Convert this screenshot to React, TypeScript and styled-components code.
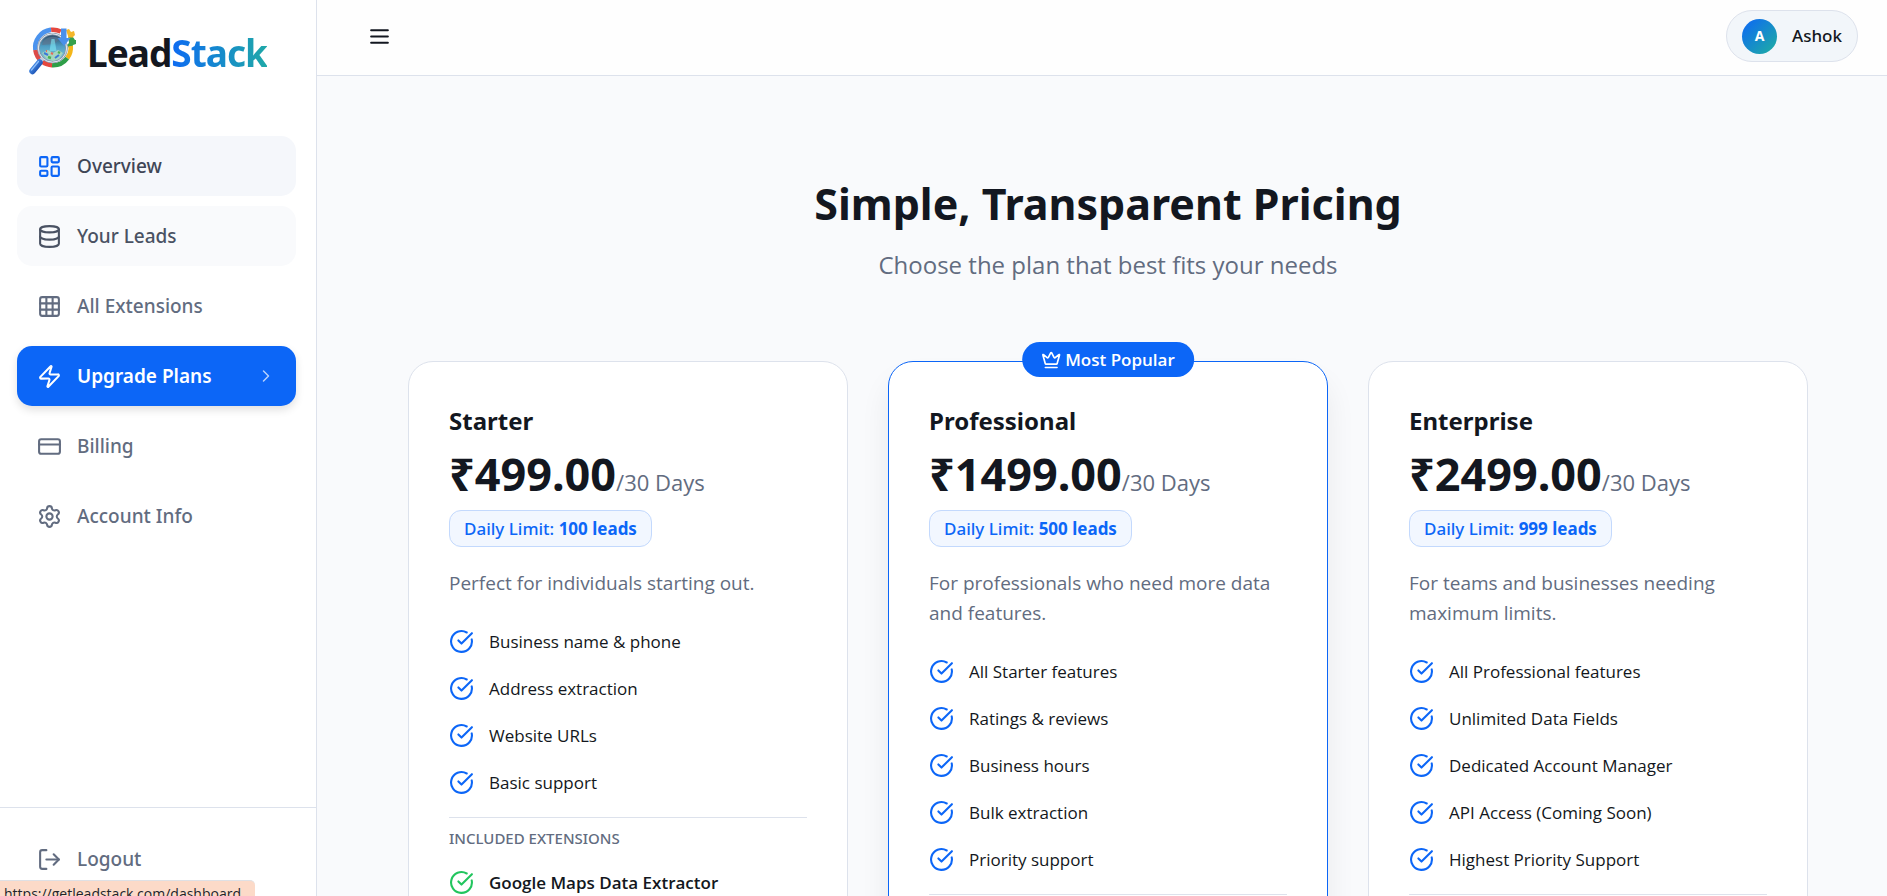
import React from 'react';
import styled, { createGlobalStyle, css } from 'styled-components';
import {
  LayoutDashboard, Database, Grid3x3, Zap, CreditCard, Settings, LogOut,
  ChevronRight, CircleCheckBig, Crown,
} from 'lucide-react';

const GlobalStyle = createGlobalStyle`
  *, *::before, *::after { box-sizing: border-box; }
  html, body { margin: 0; height: 100%; overflow: hidden; }
  body {
    font-family: 'Open Sans', 'Noto Sans', sans-serif;
    color: #131720;
    background: #f9fafc;
  }
  button { font: inherit; border: 0; background: none; padding: 0; cursor: pointer; }
  a { color: inherit; text-decoration: none; }
  ul { list-style: none; margin: 0; padding: 0; }
  h1, h2, h3, p { margin: 0; }
`;

const displayFont = css`
  font-family: 'Noto Sans', 'Open Sans', sans-serif;
`;

const Shell = styled.div`
  display: grid;
  grid-template-columns: 317px 1fr;
  height: 100vh;
`;

const Sidebar = styled.aside`
  ${displayFont}
  display: flex;
  flex-direction: column;
  background: #fff;
  border-right: 1px solid #dde2ec;
`;

const Brand = styled.a`
  display: flex;
  align-items: center;
  gap: 10px;
  height: 106px;
  padding: 0 28px;
`;

const BrandName = styled.span`
  font-size: 37px;
  line-height: 44px;
  font-weight: 700;
  letter-spacing: -1px;
`;

const BrandAccent = styled.span`
  background: linear-gradient(90deg, #0d6bf2, #1fa8a8);
  background-clip: text;
  -webkit-background-clip: text;
  color: transparent;
`;

const Nav = styled.nav`
  flex: 1;
  display: flex;
  flex-direction: column;
  gap: 10px;
  padding: 30px 20px 20px 17px;
`;

type Tone = 'plain' | 'hover' | 'faint' | 'active';

const tones = {
  plain: css`color: #626c80;`,
  hover: css`color: #3f4656; background: #f5f7fb; svg { color: #0c66f7; }`,
  faint: css`color: #4a5263; background: #f9fafc;`,
  active: css`
    color: #fff;
    background: #0c66f7;
    font-weight: 600;
    box-shadow: 0 4px 8px rgba(0, 0, 0, 0.12);
  `,
};

const navItem = css`
  display: flex;
  align-items: center;
  gap: 15px;
  height: 60px;
  padding: 0 20px;
  border-radius: 15px;
  font-size: 19px;
  line-height: 30px;
  font-weight: 500;
`;

const NavLink = styled.a<{ $tone: Tone }>`
  ${navItem}
  ${({ $tone }) => tones[$tone]}
`;

const NavLabel = styled.span`
  flex: 1;
`;

const NavArrow = styled(ChevronRight)`
  opacity: 0.7;
`;

const SidebarFoot = styled.div`
  padding: 21px 20px 7px 17px;
  border-top: 1px solid #dde2ec;
`;

const LogoutButton = styled.button`
  ${navItem}
  width: 100%;
  color: #626c80;
  text-align: left;
`;

const Page = styled.div`
  display: flex;
  flex-direction: column;
  min-width: 0;
  height: 100vh;
`;

const TopBar = styled.header`
  display: flex;
  justify-content: space-between;
  align-items: center;
  flex: none;
  padding: 10px 29px 13px 50px;
  background: #fefefe;
  border-bottom: 1px solid #dde2ec;
`;

const MenuButton = styled.button`
  display: flex;
  color: #131720;
`;

const Profile = styled.button`
  ${displayFont}
  display: flex;
  align-items: center;
  gap: 15px;
  height: 52px;
  padding: 0 15px;
  border: 1px solid #dde2ec;
  border-radius: 26px;
  background: #f2f6fa;
  color: #131720;
  font-size: 17px;
  line-height: 26px;
  font-weight: 500;
`;

const Avatar = styled.span`
  display: grid;
  place-items: center;
  width: 35px;
  height: 35px;
  border-radius: 50%;
  background: linear-gradient(135deg, #0c66f7, #1fb0a0);
  color: #fff;
  font-size: 14px;
  line-height: 20px;
  font-weight: 700;
`;

const Main = styled.main`
  flex: 1;
  overflow: hidden;
  padding: 95px 79px 40px 91px;
`;

const Intro = styled.div`
  text-align: center;
`;

const Title = styled.h1`
  ${displayFont}
  font-size: 43px;
  line-height: 66px;
  font-weight: 700;
`;

const Subtitle = styled.p`
  margin-top: 10px;
  font-size: 24px;
  line-height: 36px;
  color: #626c80;
`;

const Plans = styled.div`
  display: grid;
  grid-template-columns: repeat(3, 1fr);
  gap: 40px;
  margin-top: 78px;
`;

const Card = styled.section<{ $featured?: boolean }>`
  position: relative;
  padding: 40px;
  background: #fff;
  border: 1px solid ${({ $featured }) => ($featured ? '#0c66f7' : '#dde2ec')};
  border-radius: 25px;
  box-shadow: ${({ $featured }) => ($featured ? '0 20px 30px rgba(19, 23, 32, 0.07)' : 'none')};
`;

const Ribbon = styled.div`
  position: absolute;
  top: -20px;
  left: 50%;
  transform: translateX(-50%);
  display: flex;
  align-items: center;
  gap: 4px;
  height: 35px;
  padding: 0 19px;
  border-radius: 18px;
  background: #0c66f7;
  color: #fff;
  font-size: 17px;
  line-height: 26px;
  font-weight: 600;
  white-space: nowrap;
`;

const PlanName = styled.h2`
  ${displayFont}
  font-size: 24px;
  line-height: 38px;
  font-weight: 700;
`;

const PriceRow = styled.p`
  display: flex;
  align-items: baseline;
`;

const Price = styled.strong`
  ${displayFont}
  font-size: 45px;
  line-height: 68px;
  font-weight: 700;
`;

const Period = styled.span`
  font-size: 22px;
  line-height: 34px;
  color: #626c80;
`;

const Limit = styled.p`
  ${displayFont}
  width: fit-content;
  margin-top: 2px;
  padding: 4px 14px;
  border: 1px solid #c3d9fd;
  border-radius: 12px;
  background: #f2f7ff;
  color: #0c66f7;
  font-size: 17px;
  line-height: 27px;
  font-weight: 500;
`;

const Description = styled.p`
  margin-top: 21px;
  font-size: 19px;
  line-height: 30px;
  color: #626c80;
`;

const Features = styled.ul`
  display: flex;
  flex-direction: column;
  gap: 20px;
  margin-top: 30px;
`;

const Feature = styled.li<{ $strong?: boolean }>`
  display: flex;
  align-items: center;
  gap: 15px;
  font-size: 17px;
  line-height: 27px;
  font-weight: ${({ $strong }) => ($strong ? 600 : 400)};
  svg { flex: none; color: ${({ $strong }) => ($strong ? '#22c55e' : '#0c66f7')}; }
`;

const Included = styled.div`
  margin-top: 21px;
  padding-top: 8px;
  border-top: 1px solid #dde2ec;
  ul { margin-top: 18px; }
`;

const IncludedTitle = styled.h3`
  ${displayFont}
  font-size: 15px;
  line-height: 25px;
  font-weight: 500;
  color: #626c80;
  text-transform: uppercase;
`;

const LinkStatus = styled.div`
  position: fixed;
  left: 0;
  bottom: 0;
  width: 255px;
  height: 16px;
  padding: 3px 4px 0;
  overflow: hidden;
  border-top: 1px solid #dfe0e4;
  border-top-right-radius: 5px;
  background: #fcdac8;
  color: #22242c;
  font-size: 14px;
  line-height: 20px;
  white-space: nowrap;
`;

const ringParts = [
  { start: 262, length: 92, color: '#4b93ee' },
  { start: 354, length: 32, color: '#e5483f' },
  { start: 85, length: 42, color: '#f4b619' },
  { start: 127, length: 56, color: '#2f9e48' },
  { start: 183, length: 34, color: '#e5483f' },
  { start: 217, length: 45, color: '#dc4a48' },
];

const Logo = () => (
  <svg width="49" height="50" viewBox="6 8 49 50" overflow="visible" aria-hidden="true">
    <defs>
      <linearGradient id="lens" x1="0" y1="0" x2="0" y2="1">
        <stop offset="0" stopColor="#2c4763" />
        <stop offset="0.45" stopColor="#4f9fc4" />
        <stop offset="1" stopColor="#8fd0dc" />
      </linearGradient>
      <linearGradient id="handle" x1="0" y1="0" x2="1" y2="1">
        <stop offset="0" stopColor="#4f97f2" />
        <stop offset="1" stopColor="#1446a8" />
      </linearGradient>
      <linearGradient id="gear" x1="0" y1="0" x2="0" y2="1">
        <stop offset="0.4" stopColor="#f4b62a" />
        <stop offset="0.5" stopColor="#36a04c" />
      </linearGradient>
    </defs>
    <path
      d="M44 10l3-1 2 3 3-1 1 4-2 2 2 3 1 0 0 4-3 1 -1 3-3 0-2-3 2-2-1-7z"
      fill="url(#gear)"
    />
    {ringParts.map(({ start, length, color }) => (
      <circle
        key={start}
        cx="31" cy="27.5" r="17.8"
        fill="none" stroke={color} strokeWidth="4.6"
        pathLength="360" strokeDasharray={`${length} 360`}
        transform={`rotate(${start - 90} 31 27.5)`}
      />
    ))}
    <circle cx="30.5" cy="28" r="14" fill="url(#lens)" stroke="#8797aa" strokeWidth="2.6" />
    <circle cx="30.5" cy="28" r="14.2" fill="none" stroke="#e4edf5" strokeWidth="1" />
    <path d="M20 25a11 9 0 0 1 18-6l-6 5z" fill="#5c7690" opacity="0.7" />
    <path d="M29.500 19h3l2 12h-7z" fill="#7fe9f7" opacity="0.6" />
    <path d="M20 33l6-3 5 3 5-3 5 3-4 6-6 2-6-2z" fill="#a5d6c0" />
    <path d="M22 33l4 2M33 38l4-3" stroke="#3b78d8" strokeWidth="2" />
    <path d="M26 37l3 1M36 32l2 1" stroke="#4bb04f" strokeWidth="2.4" />
    <path d="M29 33l2 1M24 31l1 0" stroke="#e5685a" strokeWidth="2" />
    <path d="M39 8.5h5.5V18h4L42 26l-6.500-8H39z" fill="#4a90ea" />
    <path d="M21 38l-3.500 4" stroke="#c3ccd8" strokeWidth="4" />
    <path d="M17.500 42.500L10.500 51" stroke="url(#handle)" strokeWidth="6.400" strokeLinecap="round" />
    <path d="M16.500 41.500L9.500 50" stroke="#8fc0fb" strokeWidth="1.200" strokeLinecap="round" />
  </svg>
);

const MenuIcon = () => (
  <svg width="25" height="25" viewBox="0 0 24 24" fill="none" stroke="currentColor" strokeWidth="2" strokeLinecap="round">
    <path d="M4 6h16M4 12h16M4 18h16" />
  </svg>
);

const navItems: { label: string; icon: React.ElementType; tone: Tone }[] = [
  { label: 'Overview', icon: LayoutDashboard, tone: 'hover' },
  { label: 'Your Leads', icon: Database, tone: 'faint' },
  { label: 'All Extensions', icon: Grid3x3, tone: 'plain' },
  { label: 'Upgrade Plans', icon: Zap, tone: 'active' },
  { label: 'Billing', icon: CreditCard, tone: 'plain' },
  { label: 'Account Info', icon: Settings, tone: 'plain' },
];

const plans = [
  {
    name: 'Starter', price: '₹499.00', limit: '100 leads',
    text: 'Perfect for individuals starting out.',
    features: ['Business name & phone', 'Address extraction', 'Website URLs', 'Basic support'],
    extensions: ['Google Maps Data Extractor'],
  },
  {
    name: 'Professional', price: '₹1499.00', limit: '500 leads', featured: true,
    text: 'For professionals who need more data and features.',
    features: ['All Starter features', 'Ratings & reviews', 'Business hours', 'Bulk extraction', 'Priority support'],
    extensions: [],
  },
  {
    name: 'Enterprise', price: '₹2499.00', limit: '999 leads',
    text: 'For teams and businesses needing maximum limits.',
    features: ['All Professional features', 'Unlimited Data Fields', 'Dedicated Account Manager', 'API Access (Coming Soon)', 'Highest Priority Support'],
    extensions: [],
  },
];

export default function App() {
  return (
    <>
      <GlobalStyle />
      <Shell>
        <Sidebar>
          <Brand href="#">
            <Logo />
            <BrandName>Lead<BrandAccent>Stack</BrandAccent></BrandName>
          </Brand>
          <Nav>
            {navItems.map(({ label, icon: Icon, tone }) => (
              <NavLink key={label} href="#" $tone={tone}>
                <Icon size={25} />
                <NavLabel>{label}</NavLabel>
                {tone === 'active' && <NavArrow size={20} strokeWidth={1.75} />}
              </NavLink>
            ))}
          </Nav>
          <SidebarFoot>
            <LogoutButton type="button">
              <LogOut size={25} />
              Logout
            </LogoutButton>
          </SidebarFoot>
        </Sidebar>
        <Page>
          <TopBar>
            <MenuButton type="button" aria-label="Toggle menu"><MenuIcon /></MenuButton>
            <Profile type="button">
              <Avatar>A</Avatar>
              Ashok
            </Profile>
          </TopBar>
          <Main>
            <Intro>
              <Title>Simple, Transparent Pricing</Title>
              <Subtitle>Choose the plan that best fits your needs</Subtitle>
            </Intro>
            <Plans>
              {plans.map((plan) => (
                <Card key={plan.name} $featured={plan.featured}>
                  {plan.featured && <Ribbon><Crown size={20} />Most Popular</Ribbon>}
                  <PlanName>{plan.name}</PlanName>
                  <PriceRow>
                    <Price>{plan.price}</Price>
                    <Period>/30 Days</Period>
                  </PriceRow>
                  <Limit>Daily Limit: <strong>{plan.limit}</strong></Limit>
                  <Description>{plan.text}</Description>
                  <Features>
                    {plan.features.map((item) => (
                      <Feature key={item}><CircleCheckBig size={25} />{item}</Feature>
                    ))}
                  </Features>
                  <Included>
                    {plan.extensions.length > 0 && (
                      <>
                        <IncludedTitle>Included Extensions</IncludedTitle>
                        <Features>
                          {plan.extensions.map((item) => (
                            <Feature key={item} $strong><CircleCheckBig size={25} />{item}</Feature>
                          ))}
                        </Features>
                      </>
                    )}
                  </Included>
                </Card>
              ))}
            </Plans>
          </Main>
        </Page>
      </Shell>
      <LinkStatus>https://getleadstack.com/dashboard</LinkStatus>
    </>
  );
}
